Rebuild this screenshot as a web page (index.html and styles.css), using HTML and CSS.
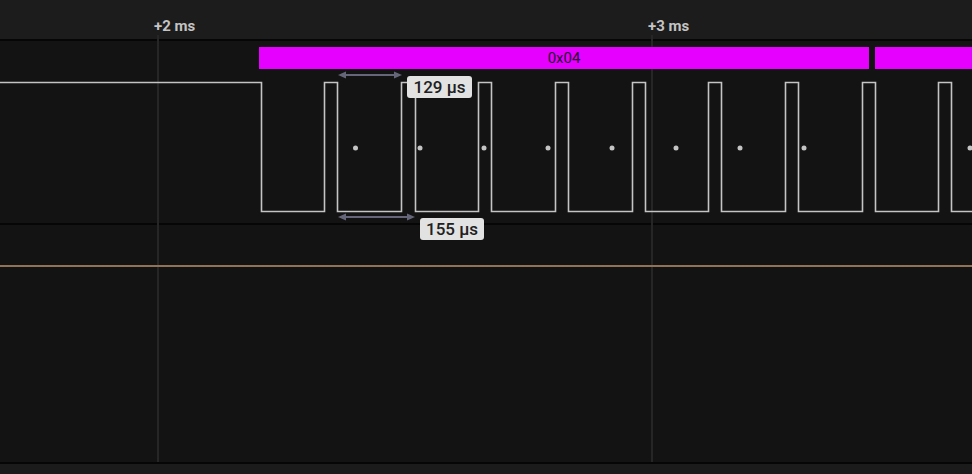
FILE: index.html
```html
<!DOCTYPE html>
<html>
<head>
<meta charset="utf-8">
<link rel="stylesheet" href="styles.css">
</head>
<body>
<div class="view">
  <div class="ruler">
    <span class="tick-label t2">+2 ms</span>
    <span class="tick-label t3">+3 ms</span>
  </div>
  <div class="channel ch1">
    <svg class="wave" width="972" height="182" viewBox="0 41 972 182">
      <path d="M0 82.5 H261.5 V211.5 H324.5 V82.5 H337.5 V211.5 H401.5 V82.5 H415.5 V211.5 H478.5 V82.5 H491.5 V211.5 H555.5 V82.5 H568.5 V211.5 H632.5 V82.5 H645.5 V211.5 H708.5 V82.5 H721.5 V211.5 H785.5 V82.5 H798.5 V211.5 H862.5 V82.5 H875.5 V211.5 H938.5 V82.5 H951.5 V211.5 H972" fill="none" stroke="#c4c4c4" stroke-width="1.6"/>
      <g fill="#c4c4c4">
        <circle cx="355.5" cy="148" r="2.5"/>
        <circle cx="420" cy="148" r="2.5"/>
        <circle cx="484" cy="148" r="2.5"/>
        <circle cx="548" cy="148" r="2.5"/>
        <circle cx="612" cy="148" r="2.5"/>
        <circle cx="676" cy="148" r="2.5"/>
        <circle cx="740" cy="148" r="2.5"/>
        <circle cx="804" cy="148" r="2.5"/>
        <circle cx="970" cy="148" r="2.5"/>
      </g>
      <g stroke="#66667a" stroke-width="2" fill="#66667a">
        <line x1="342" y1="75" x2="397" y2="75"/>
        <polygon points="338,75 346,71.5 346,78.5" stroke="none"/>
        <polygon points="402,75 394,71.5 394,78.5" stroke="none"/>
        <line x1="342" y1="217" x2="410" y2="217"/>
        <polygon points="338,217 346,213.5 346,220.5" stroke="none"/>
        <polygon points="415,217 407,213.5 407,220.5" stroke="none"/>
      </g>
    </svg>
    <div class="frame f1">0x04</div>
    <div class="frame f2"></div>
    <div class="measure m1">129 µs</div>
    <div class="measure m2">155 µs</div>
  </div>
  <div class="channel ch2">
    <div class="analog-line"></div>
  </div>
  <div class="footer"></div>
  <div class="gridline g2"></div>
  <div class="gridline g3"></div>
</div>
</body>
</html>
```
FILE: styles.css
```css
* { box-sizing: border-box; }
html, body {
  margin: 0;
  padding: 0;
  background: #1b1b1b;
  overflow: hidden;
}
.view {
  position: relative;
  width: 972px;
  height: 474px;
  display: flex;
  flex-direction: column;
  font-family: Roboto, "Liberation Sans", sans-serif;
}
.ruler {
  position: relative;
  height: 41px;
  flex: none;
  background: #1c1c1c;
  border-bottom: 2px solid #060606;
}
.tick-label {
  position: absolute;
  top: 18px;
  font-size: 15px;
  font-weight: 700;
  color: #c4c4c4;
  line-height: 16px;
}
.t2 { left: 154px; }
.t3 { left: 648px; }
.channel {
  position: relative;
  flex: none;
  background: #131313;
  border-bottom: 2px solid #060606;
}
.ch1 { height: 184px; }
.ch2 { height: 239px; }
.wave {
  position: absolute;
  left: 0;
  top: 0;
  display: block;
  z-index: 2;
}
.frame {
  position: absolute;
  top: 6px;
  height: 22px;
  background: #e600ff;
  color: #26062e;
  font-size: 15px;
  display: flex;
  align-items: center;
  justify-content: center;
  z-index: 3;
}
.f1 { left: 259px; width: 610px; }
.f2 { left: 875px; width: 97px; }
.measure {
  position: absolute;
  height: 22px;
  background: #e2e2e2;
  color: #202020;
  border-radius: 3px;
  font-size: 17px;
  font-weight: 500;
  display: flex;
  align-items: center;
  justify-content: center;
  z-index: 4;
}
.m1 { left: 407px; top: 35px; width: 65px; }
.m2 { left: 420px; top: 177px; width: 64px; }
.analog-line {
  position: absolute;
  left: 0;
  right: 0;
  top: 40px;
  height: 2px;
  background: #8f7257;
  z-index: 2;
}
.footer {
  flex: 1;
  background: #1b1b1b;
}
.gridline {
  position: absolute;
  top: 35px;
  height: 427px;
  width: 2px;
  background: #262626;
  z-index: 1;
}
.g2 { left: 157px; }
.g3 { left: 651px; }
```
